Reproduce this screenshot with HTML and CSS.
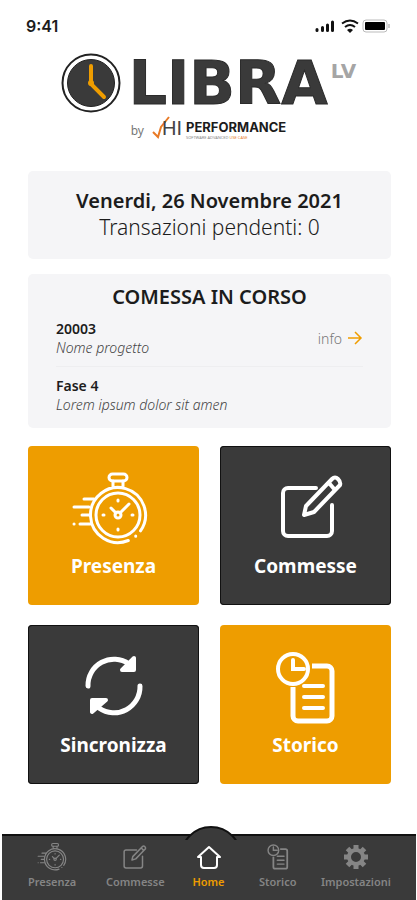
FILE: index.html
```html
<!DOCTYPE html>
<html lang="it">
<head>
<meta charset="utf-8">
<meta name="viewport" content="width=device-width, initial-scale=1">
<title>Libra LV</title>
<link rel="stylesheet" href="styles.css">
</head>
<body>
<svg class="defs" aria-hidden="true">
  <symbol id="stopwatch" viewBox="0 0 78 76">
    <g fill="none" stroke="currentColor" stroke-width="3" stroke-linecap="round">
      <rect x="38" y="3" width="18" height="7" rx="3.500"/>
      <path d="M42 10v6M52 10v6M57.300 69.500A27.500 27.500 0 1 1 69.500 59.800M64.700 65.100v.1"/>
      <circle cx="47" cy="44" r="22"/>
      <circle cx="47" cy="44" r="3"/>
      <path d="M45 42l-5-5M49 42l9-9M47 29v1M47 58v1M32 44h1M61 44h1M13 28h10M3 36h15M11 44h8M9 53h10M3 53h.1"/>
    </g>
  </symbol>
  <symbol id="edit" viewBox="0 0 64 64">
    <g fill="none" stroke="currentColor" stroke-width="4" stroke-linejoin="round" stroke-linecap="round">
      <path d="M36 13H8a5 5 0 0 0-5 5v38a5 5 0 0 0 5 5h39a5 5 0 0 0 5-5V30"/>
      <path d="M26 31L52 4q3-3 6 0t2 6L34 37l-10 3zM49 8l6 7"/>
    </g>
  </symbol>
  <symbol id="history" viewBox="0 0 62 74">
    <g fill="none" stroke="currentColor" stroke-width="4" stroke-linecap="round">
      <circle cx="18" cy="18" r="15"/>
      <path d="M18 9v9h11"/>
      <path d="M37 15h15a5 5 0 0 1 5 5v45a5 5 0 0 1-5 5H23a5 5 0 0 1-5-5V36" stroke-width="5" stroke-linecap="butt"/>
      <path d="M29 35h19M29 46h19M29 57h19"/>
    </g>
  </symbol>
</svg>

<header class="header">
  <div class="status">
    <span>9:41</span>
    <svg width="76" height="16" viewBox="0 0 76 16" aria-hidden="true">
      <path d="M2 11.500v1M7.500 9.500V12.500M12.500 7v5.500M17.500 4v8.500" stroke="#111" stroke-width="3" stroke-linecap="round"/>
      <path d="M27 5.500q8-6 16 0M30 9q5-4 10 0" fill="none" stroke="#111" stroke-width="2"/>
      <path d="M32 12q3-2.500 6 0l-3 3z" fill="#111"/>
      <rect x="48" y="2" width="24" height="12" rx="3" fill="#fff" stroke="#bbb"/>
      <rect x="50" y="4" width="20" height="8" rx="1" fill="#000"/>
      <path d="M74 6v4" stroke="#999"/>
    </svg>
  </div>
  <div class="brand">
    <svg width="60" height="60" viewBox="0 0 60 60" aria-hidden="true">
      <circle cx="30" cy="30" r="28.500" fill="#fff" stroke="#222" stroke-width="2"/>
      <circle cx="30" cy="30" r="23.500" fill="#3a3a3a" stroke="#222"/>
      <path d="M30 13v18l13 13" fill="none" stroke="#ef9d00" stroke-width="4" stroke-linecap="round"/>
      <circle cx="30" cy="30" r="3" fill="#ef9d00"/>
    </svg>
    <h1 class="logo">LIBRA</h1><span class="edition">LV</span>
  </div>
  <div class="byline">
    <span class="by">by</span>
    <span class="check">
      <svg width="18" height="24" viewBox="0 0 18 24" aria-hidden="true"><path d="M1 16l5 5L9 11 17 1" fill="none" stroke="#e87a26" stroke-width="2"/></svg>
      <span class="hi">HI</span>
    </span>
    <span class="company"><b>PERFORMANCE</b><small>SOFTWARE ADVANCED <em>USE CASE</em></small></span>
  </div>
</header>

<main class="main">
  <section class="card summary">
    <h2>Venerdi, 26 Novembre 2021</h2>
    <p>Transazioni pendenti: 0</p>
  </section>
  <section class="card order">
    <h2>COMESSA IN CORSO</h2>
    <div class="row">
      <div><h3>20003</h3><p>Nome progetto</p></div>
      <a class="info" href="#info">info
        <svg width="16" height="14" viewBox="0 0 16 14" aria-hidden="true"><path d="M1 7h13M8 1l6 6-6 6" fill="none" stroke="#ef9d00" stroke-width="1.500"/></svg>
      </a>
    </div>
    <div class="row phase"><div><h3>Fase 4</h3><p>Lorem ipsum dolor sit amen</p></div></div>
  </section>
  <div class="tiles">
    <button class="tile orange"><svg width="86" height="76" viewBox="0 0 86 76"><use href="#stopwatch" width="78" height="76"/></svg><span>Presenza</span></button>
    <button class="tile dark"><svg width="76" height="76" viewBox="-12 -4 76 76"><use href="#edit" width="64" height="64"/></svg><span>Commesse</span></button>
    <button class="tile dark">
      <svg width="60" height="76" viewBox="0 3 60 76" aria-hidden="true">
        <path d="M4 39a26 26 0 0 1 41-22M56 39a26 26 0 0 1-41 22" fill="none" stroke="currentColor" stroke-width="5" stroke-linecap="round"/>
        <path d="M50 11v12H38zM8 65V53h14z" fill="currentColor" stroke="currentColor" stroke-width="4" stroke-linejoin="round"/>
      </svg>
      <span>Sincronizza</span></button>
    <button class="tile orange"><svg width="62" height="76"><use href="#history"/></svg><span>Storico</span></button>
  </div>
</main>

<nav class="nav">
  <a href="#presenza"><svg width="30" height="30"><use href="#stopwatch"/></svg><span>Presenza</span></a>
  <a href="#commesse"><svg width="24" height="30"><use href="#edit"/></svg><span>Commesse</span></a>
  <a class="home" href="#home" aria-current="page">
    <svg width="26" height="30" viewBox="0 0 26 30" aria-hidden="true"><path d="M2 15L13 5l11 10h-3v8q0 3-3 3H8q-3 0-3-3v-8z" fill="none" stroke="#fff" stroke-width="2" stroke-linejoin="round"/></svg>
    <span>Home</span></a>
  <a href="#storico"><svg width="22" height="30"><use href="#history"/></svg><span>Storico</span></a>
  <a href="#impostazioni">
    <svg width="26" height="30" viewBox="-13 -15 26 30" aria-hidden="true">
      <g fill="none" stroke="currentColor"><circle r="7" stroke-width="4"/>
      <path d="M0-12v4M0 8v4M-12 0h4M8 0h4M-8.500-8.500l3 3M5.500 5.500l3 3M-8.500 8.500l3-3M5.500-5.500l3-3" stroke-width="5"/></g>
    </svg>
    <span>Impostazioni</span></a>
</nav>
</body>
</html>
```
FILE: styles.css
```css
* { box-sizing: border-box; }
body {
  margin: 0;
  min-height: 100vh;
  display: flex;
  flex-direction: column;
  background: #fff;
  color: #1c1c1c;
  font-family: "Noto Sans", sans-serif;
}
h1, h2, h3, p { margin: 0; }
a { color: inherit; text-decoration: none; }
svg { display: block; flex: none; }
.defs { position: absolute; width: 0; height: 0; }

.status {
  display: flex;
  justify-content: space-between;
  align-items: center;
  padding: 16px 26px 0;
  height: 36px;
  font: 600 16px/20px Inter, sans-serif;
}
.brand {
  display: flex;
  justify-content: center;
  align-items: center;
  height: 60px;
  margin-top: 17px;
}
.logo {
  margin-left: 8px;
  color: #3a3a3a;
  font: 700 60px/60px "DejaVu Sans", sans-serif;
  -webkit-text-stroke: 1px #2b2b2b;
}
.edition {
  align-self: flex-start;
  margin-left: 3px;
  color: #a5a5a5;
  font: 700 20px/36px "DejaVu Sans", sans-serif;
}
.byline {
  display: flex;
  justify-content: center;
  align-items: center;
  gap: 8px;
  height: 30px;
  padding-top: 4px;
}
.by { color: #777; font-size: 12px; }
.check { display: flex; align-items: center; margin-top: -4px; }
.hi { margin-left: -8px; color: #444; font: 20px/24px "Liberation Sans", sans-serif; }
.company { display: flex; flex-direction: column; margin-left: -4px; }
.company b { font: 700 13px/16px Inter, sans-serif; }
.company small { color: #888; font-size: 4px; line-height: 6px; }
.company em { color: #e87a26; font-style: normal; }

.main {
  display: flex;
  flex-direction: column;
  gap: 15px;
  padding: 28px 26px 50px 28px;
}
.card { border-radius: 5px; background: #f5f5f7; }
.card h2 { text-align: center; font-size: 20px; line-height: 26px; font-weight: 600; }
.summary { padding: 17px 8px 19px; text-align: center; }
.summary p { font-size: 21px; line-height: 26px; font-weight: 300; }
.order { padding: 10px 28px 5px; }
.row { display: flex; justify-content: space-between; align-items: center; padding: 9px 0; }
.row h3 { font-size: 14px; line-height: 19px; font-weight: 600; }
.row p { color: #444; font-size: 14px; line-height: 19px; font-style: italic; font-weight: 300; }
.phase { border-top: 1px solid #eeeef0; }
.info { display: flex; align-items: center; gap: 5px; color: #777; font-size: 14px; font-weight: 300; }

.tiles {
  display: grid;
  grid-template-columns: 1fr 1fr;
  gap: 20px 21px;
  margin-top: 3px;
}
.tile {
  display: flex;
  flex-direction: column;
  align-items: center;
  gap: 5px;
  height: 159px;
  padding: 25px 0 0;
  border: 0;
  border-radius: 4px;
  color: #fff;
  font: 700 19px/28px "Noto Sans", sans-serif;
}
.orange { background: #ee9d00; }
.dark { background: #3a3a3a; box-shadow: inset 0 0 0 1px #111; }

.nav {
  display: grid;
  grid-template-columns: 78fr 88fr 58fr 80fr 76fr;
  align-items: start;
  height: 66px;
  margin: auto 1px 1px 2px;
  padding: 6px 22px 0 11px;
  border-top: 2px solid #111;
  background: #3a3a3a;
  color: #858585;
  font: 600 11px/18px "Noto Sans", sans-serif;
}
.nav a { display: flex; flex-direction: column; align-items: center; gap: 1px; }
.nav .home { position: relative; color: #ee9d00; }
.home::before {
  content: "";
  position: absolute;
  top: -16px;
  left: 50%;
  width: 58px;
  height: 58px;
  margin-left: -29px;
  border: 2px solid #111;
  border-radius: 50%;
  background: #3a3a3a;
  clip-path: inset(0 0 48px);
}
.home > * { position: relative; }
```
